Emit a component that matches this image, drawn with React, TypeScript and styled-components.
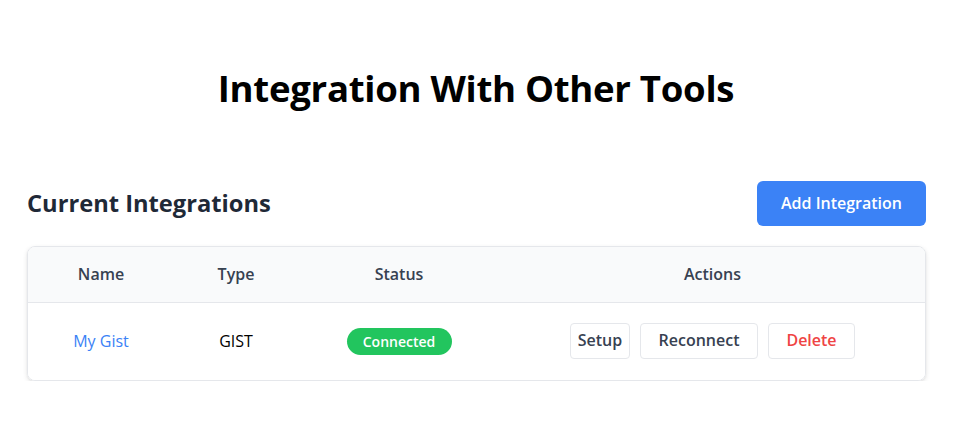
import React from "react";
import styled, { createGlobalStyle } from "styled-components";

const Global = createGlobalStyle`
  html, body { margin: 0; padding: 0; background: #ffffff; }
  body { font-family: "Open Sans", "Noto Sans", sans-serif; color: #000; }
  * { box-sizing: border-box; }
`;

const Page = styled.main`
  padding: 0 30px 0 26px;
`;

const Title = styled.h1`
  margin: 0;
  padding-top: 62px;
  height: 181px;
  text-align: center;
  font-size: 36.6px;
  line-height: 52px;
  font-weight: 700;
  letter-spacing: -0.3px;
  color: #000;
`;

const SectionHeader = styled.div`
  display: flex;
  align-items: center;
  justify-content: space-between;
  height: 45px;
  margin-bottom: 20px;
`;

const SectionTitle = styled.h2`
  margin: 0 0 2px;
  font-size: 23.7px;
  font-weight: 700;
  color: #1f2937;
  padding-left: 1px;
`;

const PrimaryButton = styled.button`
  height: 45px;
  width: 169px;
  padding: 0 0 2px;
  border: none;
  border-radius: 6px;
  background: #3b82f6;
  color: #fff;
  font-family: inherit;
  font-size: 16px;
  font-weight: 600;
  cursor: pointer;
`;

const Card = styled.div`
  margin-left: 1px;
  border: 1px solid #e5e7eb;
  border-radius: 8px;
  overflow: hidden;
  box-shadow: 0 2px 5px rgba(0, 0, 0, 0.1), 0 1px 2px rgba(0, 0, 0, 0.05);
`;

const Row = styled.div<{ $head?: boolean }>`
  display: grid;
  grid-template-columns: 146px 124px 202px 1fr;
  align-items: center;
  height: ${(p) => (p.$head ? "56px" : "77px")};
  padding-bottom: ${(p) => (p.$head ? "1px" : "1px")};
  background: ${(p) => (p.$head ? "#f9fafb" : "#ffffff")};
  border-bottom: ${(p) => (p.$head ? "1px solid #e5e7eb" : "none")};
`;

const HeadCell = styled.div`
  text-align: center;
  font-size: 16px;
  font-weight: 600;
  color: #374151;
`;

const Cell = styled.div`
  display: flex;
  justify-content: center;
  align-items: center;
  gap: 10px;
  font-size: 16px;
`;

const NameLink = styled.a`
  color: #3b82f6;
  text-decoration: none;
`;

const Badge = styled.span`
  display: inline-flex;
  align-items: center;
  justify-content: center;
  width: 105px;
  height: 27px;
  border-radius: 999px;
  background: #22c55e;
  color: #fff;
  font-size: 14px;
  font-weight: 600;
`;

const ActionButton = styled.button<{ $danger?: boolean; $width: number }>`
  height: 36px;
  width: ${(p) => p.$width}px;
  padding: 0 0 2px;
  border: 1px solid #e5e7eb;
  border-radius: 4px;
  background: #fff;
  color: ${(p) => (p.$danger ? "#ef4444" : "#374151")};
  font-family: inherit;
  font-size: 16px;
  font-weight: 600;
  cursor: pointer;
`;

export default function App() {
  return (
    <>
      <Global />
      <Page>
        <Title>Integration With Other Tools</Title>
        <SectionHeader>
          <SectionTitle>Current Integrations</SectionTitle>
          <PrimaryButton>Add Integration</PrimaryButton>
        </SectionHeader>
        <Card>
          <Row $head>
            <HeadCell>Name</HeadCell>
            <HeadCell>Type</HeadCell>
            <HeadCell>Status</HeadCell>
            <HeadCell>Actions</HeadCell>
          </Row>
          <Row>
            <Cell>
              <NameLink href="#">My Gist</NameLink>
            </Cell>
            <Cell>GIST</Cell>
            <Cell>
              <Badge>Connected</Badge>
            </Cell>
            <Cell>
              <ActionButton $width={60}>Setup</ActionButton>
              <ActionButton $width={118}>Reconnect</ActionButton>
              <ActionButton $width={87} $danger>
                Delete
              </ActionButton>
            </Cell>
          </Row>
        </Card>
      </Page>
    </>
  );
}
